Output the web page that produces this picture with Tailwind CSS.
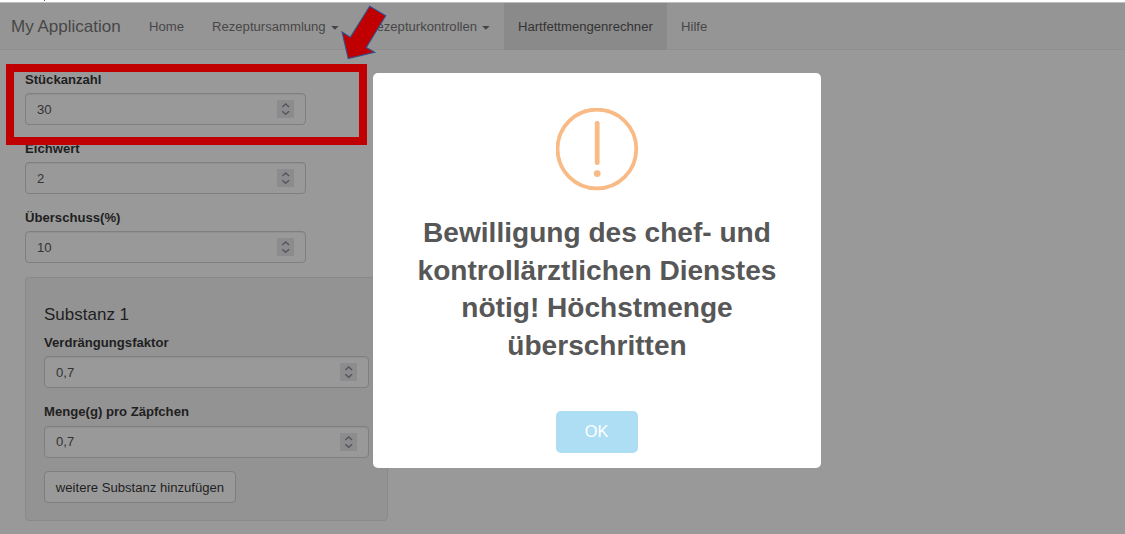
<!DOCTYPE html>
<html lang="de">
<head>
<meta charset="utf-8">
<title>Hartfettmengenrechner</title>
<script src="https://cdn.jsdelivr.net/npm/@tailwindcss/browser@4"></script>
</head>
<body class="relative w-[1125px] h-[534px] overflow-hidden bg-[#999999] font-['Liberation_Sans',Arial,sans-serif] text-[13.125px] leading-[18.75px] text-[#1f1f1f]">
<svg width="0" height="0" class="absolute">
  <symbol id="spin" viewBox="0 0 17 18"><rect width="17" height="18" fill="#8c8c8e"/><path d="M5.3 7 L8.7 3.9 L12.1 7 M5.3 11.2 L8.7 14.3 L12.1 11.2" fill="none" stroke="#55555b" stroke-width="1.4"/></symbol>
  <symbol id="caret" viewBox="0 0 8 4"><path d="M0.2 0 H7.6 L3.9 3.8 Z" fill="#444444"/></symbol>
</svg>
<div class="relative h-[3px] bg-white border-b border-[#bdbdbd]"><div class="absolute left-[44px] top-0 w-px h-px bg-[#555]"></div></div>
<nav class="flex h-[47px] bg-[#959595] border-b border-[#8f8f8f] text-[#474747] leading-[48px] whitespace-nowrap">
  <a class="w-[135px] pl-[11px] text-[17px]"><span>My Application</span></a>
  <a class="w-[63px] pl-[14px]"><span>Home</span></a>
  <a class="w-[155px] pl-[14px] flex items-start"><span>Rezeptursammlung</span><svg class="ml-[5px] mt-[23px] w-[8px] h-[4px]"><use href="#caret"/></svg></a>
  <a class="w-[151px] pl-[14px] flex items-start"><span>Rezepturkontrollen</span><svg class="ml-[5px] mt-[23px] w-[8px] h-[4px]"><use href="#caret"/></svg></a>
  <a class="w-[163px] h-[47px] pl-[14px] bg-[#8a8a8a] text-[#333333]"><span>Hartfettmengenrechner</span></a>
  <a class="pl-[14px]"><span>Hilfe</span></a>
</nav>
<main class="pl-[25px] pt-[20px] whitespace-nowrap">
  <div class="flex flex-col w-[281px] gap-[14px]">
    <div><label class="block font-bold pt-[0.8px] mb-[3.6px]"><span>Stückanzahl</span></label>
      <div class="flex items-center justify-between h-[32px] rounded-[4px] border border-[#7f7f7f] px-[11px] text-[#333333] shadow-[inset_0_1px_1px_rgba(0,0,0,0.06)]"><span class="pt-[2px]">30</span><svg class="w-[17px] h-[18px]"><use href="#spin"/></svg></div></div>
    <div><label class="block font-bold pt-[0.8px] mb-[3.6px]"><span>Eichwert</span></label>
      <div class="flex items-center justify-between h-[32px] rounded-[4px] border border-[#7f7f7f] px-[11px] text-[#333333] shadow-[inset_0_1px_1px_rgba(0,0,0,0.06)]"><span class="pt-[2px]">2</span><svg class="w-[17px] h-[18px]"><use href="#spin"/></svg></div></div>
    <div><label class="block font-bold pt-[0.8px] mb-[3.6px]"><span>Überschuss(%)</span></label>
      <div class="flex items-center justify-between h-[32px] rounded-[4px] border border-[#7f7f7f] px-[11px] text-[#333333] shadow-[inset_0_1px_1px_rgba(0,0,0,0.06)]"><span class="pt-px">10</span><svg class="w-[17px] h-[18px]"><use href="#spin"/></svg></div></div>
  </div>
  <section class="mt-[13.5px] w-[363px] h-[244px] rounded-[4px] border border-[#898989] bg-[#939393] px-[18px] pt-[26px]">
    <h4 class="text-[17px] leading-[21px] mb-[8px]"><span>Substanz 1</span></h4>
    <div class="flex flex-col w-[325px] gap-[14px]">
      <div><label class="block font-bold pt-[1px] mb-[3.6px]"><span>Verdrängungsfaktor</span></label>
        <div class="flex items-center justify-between h-[32px] rounded-[4px] border border-[#7f7f7f] bg-[#999999] px-[11px] text-[#333333] shadow-[inset_0_1px_1px_rgba(0,0,0,0.06)]"><span class="pt-[2px]">0,7</span><svg class="w-[17px] h-[18px]"><use href="#spin"/></svg></div></div>
      <div><label class="block font-bold pt-[1px] mb-[3.6px]"><span>Menge(g) pro Zäpfchen</span></label>
        <div class="flex items-center justify-between h-[32px] rounded-[4px] border border-[#7f7f7f] bg-[#999999] px-[11px] text-[#333333] shadow-[inset_0_1px_1px_rgba(0,0,0,0.06)]"><span class="pt-[2px]">0,7</span><svg class="w-[17px] h-[18px]"><use href="#spin"/></svg></div></div>
    </div>
    <button class="block mt-[13px] w-[192px] h-[32px] pt-[3px] rounded-[4px] border border-[#7f7f7f] bg-[#999999] text-center"><span>weitere Substanz hinzufügen</span></button>
  </section>
</main>
<div class="absolute left-[373px] top-[73px] w-[448px] h-[395px] rounded-[5px] bg-white flex flex-col items-center">
  <svg class="mt-[35px] w-[83px] h-[83px] shrink-0" viewBox="0 0 83 83"><circle cx="40.9" cy="41" r="39.4" fill="none" stroke="#f8bb86" stroke-width="3.8"/><rect x="38.8" y="13" width="4.8" height="44" rx="2" fill="#f8bb86"/><circle cx="41.2" cy="65.6" r="3.4" fill="#f8bb86"/></svg>
  <h2 class="mt-[23px] w-[447px] text-center font-bold text-[28.08px] leading-[37.5px] text-[#575757] whitespace-nowrap"><span>Bewilligung des chef- und</span><br><span>kontrollärztlichen Dienstes</span><br><span>nötig! Höchstmenge</span><br><span>überschritten</span></h2>
  <button class="mt-[47px] mr-px w-[82px] h-[41.5px] rounded-[5px] bg-[#aedef4] text-white text-[16.4px] leading-[41px]"><span>OK</span></button>
</div>
<div class="absolute left-[6px] top-[64px] w-[361px] h-[81px] border-8 border-[#c00000]"></div>
<svg class="absolute left-[335px] top-0 w-[60px] h-[65px]" viewBox="335 0 60 65"><path d="M369.7 6.2 L385.7 15.7 L366.3 47.5 L374.7 52.3 L348.2 58.6 L342 32 L350.3 37.2 Z" fill="#c00000" stroke="#2f528f" stroke-width="1.1"/></svg>
</body>
</html>
